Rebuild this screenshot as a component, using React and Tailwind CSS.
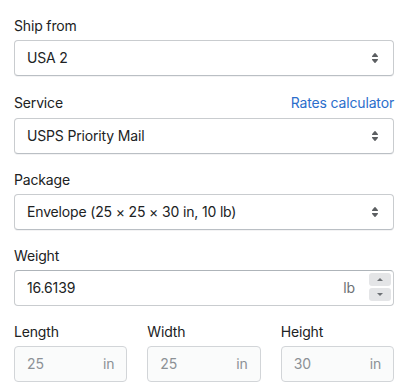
import React from "react";

function SelectIcon() {
  return (
    <svg viewBox="0 0 20 20" className="w-5 h-5 shrink-0" fill="#5c5f62">
      <path d="M7.676 9h4.648c.563 0 .879-.603.53-1.014l-2.323-2.746a.708.708 0 0 0-1.062 0l-2.324 2.746c-.347.411-.032 1.014.531 1.014Zm4.648 2h-4.648c-.563 0-.878.603-.53 1.014l2.323 2.746c.27.32.792.32 1.062 0l2.323-2.746c.349-.411.033-1.014-.53-1.014Z" />
    </svg>
  );
}

function Label({ children }) {
  return <div className="text-[14px] leading-5 text-[#202223] mb-1">{children}</div>;
}

function SelectBox({ value }) {
  return (
    <div className="h-9 flex items-center justify-between rounded-[4px] border border-[#c9cccf] border-b-[#babfc4] bg-white pl-3 pr-2 shadow-[0_1px_0_rgba(22,29,37,0.05)]">
      <span className="text-[14px] leading-5 text-[#202223]">{value}</span>
      <SelectIcon />
    </div>
  );
}

function Dim({ label, value }) {
  return (
    <div>
      <Label>{label}</Label>
      <div className="h-9 flex items-center justify-between rounded-[4px] border border-[#d2d5d8] bg-[#fafbfb] px-3">
        <span className="text-[14px] leading-5 text-[#8c9196]">{value}</span>
        <span className="text-[14px] leading-5 text-[#8c9196]">in</span>
      </div>
    </div>
  );
}

export default function App() {
  return (
    <div
      className="w-[408px] h-[392px] bg-white px-[14px] pt-4 overflow-hidden flex flex-col gap-4 tracking-[-0.01em]"
      style={{ fontFamily: "Inter, 'Noto Sans', sans-serif" }}
    >
      <div>
        <Label>Ship from</Label>
        <SelectBox value="USA 2" />
      </div>
      <div>
        <div className="h-[22px] flex items-center justify-between mb-1">
          <span className="text-[14px] leading-5 text-[#202223]">Service</span>
          <span className="text-[14px] leading-5 text-[#2c6ecb]">Rates calculator</span>
        </div>
        <SelectBox value="USPS Priority Mail" />
      </div>
      <div>
        <Label>Package</Label>
        <SelectBox value="Envelope (25 × 25 × 30 in, 10 lb)" />
      </div>
      <div>
        <Label>Weight</Label>
        <div className="h-9 flex items-start rounded-[4px] border border-[#c9cccf] border-t-[#aeb4b9] bg-white pl-3">
          <span className="self-center flex-1 text-[14px] leading-5 text-[#202223]">16.6139</span>
          <span className="self-center text-[14px] leading-5 text-[#6d7175] mr-[14px]">lb</span>
          <div className="mt-[2px] mr-[2px] w-[22px] flex flex-col gap-[2px]">
            <div className="h-[13px] rounded-[3px] bg-[#e4e5e7] flex items-center justify-center">
              <div className="w-0 h-0 border-l-[3px] border-r-[3px] border-b-[3px] border-l-transparent border-r-transparent border-b-[#6d7175]" />
            </div>
            <div className="h-[13px] rounded-[3px] bg-[#e4e5e7] flex items-center justify-center">
              <div className="w-0 h-0 border-l-[3px] border-r-[3px] border-t-[3px] border-l-transparent border-r-transparent border-t-[#6d7175]" />
            </div>
          </div>
        </div>
      </div>
      <div className="grid grid-cols-3 gap-5">
        <Dim label="Length" value="25" />
        <Dim label="Width" value="25" />
        <Dim label="Height" value="30" />
      </div>
    </div>
  );
}
